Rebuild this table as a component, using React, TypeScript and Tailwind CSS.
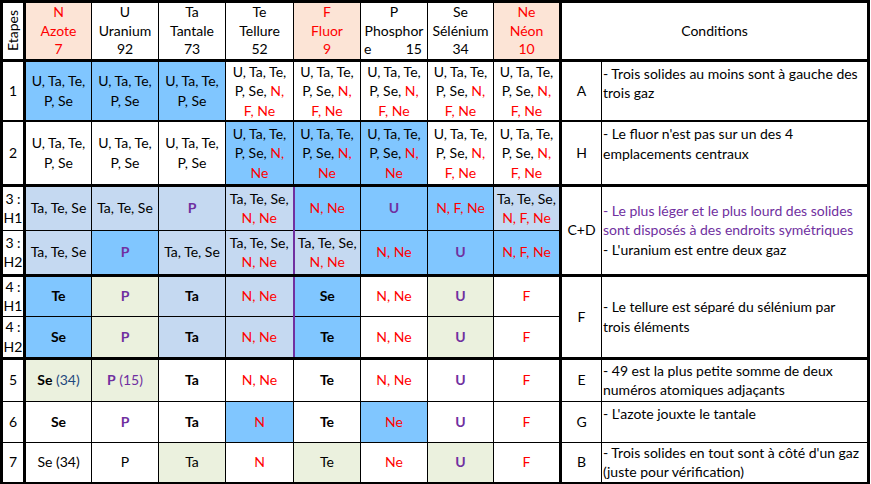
import React from 'react';

const BLUE = 'bg-[#80c6ff]';
const LIGHT = 'bg-[#c5d9f1]';
const GREEN = 'bg-[#ebf1de]';
const WHITE = 'bg-white';
const PEACH = 'bg-[#fce4d6]';

const R = ({ children }: { children: React.ReactNode }) => <span className="text-[#ff0000]">{children}</span>;
const PB = ({ children }: { children: React.ReactNode }) => <span className="font-bold text-[#7030a0]">{children}</span>;
const B = ({ children }: { children: React.ReactNode }) => <span className="font-bold">{children}</span>;

type Cell = [string, React.ReactNode[]];

interface Row {
  label: string[];
  h: string;
  bottom: string;
  purple?: boolean;
  cells: Cell[];
  cond?: { letter: string; lines: React.ReactNode[]; span?: number; top?: boolean };
}

const all5 = ['U, Ta, Te,', 'P, Se'];
const all8 = ['U, Ta, Te,', <>P, Se, <R>N,</R></>, <R>F, Ne</R>];
const noF = ['U, Ta, Te,', <>P, Se, <R>N,</R></>, <R>Ne</R>];
const tts = ['Ta, Te, Se'];
const ttsNNe = ['Ta, Te, Se,', <R>N, Ne</R>];
const ttsNFNe = ['Ta, Te, Se,', <R>N, F, Ne</R>];

const rows: Row[] = [
  {
    label: ['1'], h: 'h-[58px]', bottom: 'border-b-2',
    cells: [[BLUE, all5], [BLUE, all5], [BLUE, all5], [WHITE, all8], [WHITE, all8], [WHITE, all8], [WHITE, all8], [WHITE, all8]],
    cond: { letter: 'A', top: true, lines: ['- Trois solides au moins sont à gauche des', 'trois gaz'] },
  },
  {
    label: ['2'], h: 'h-[64px]', bottom: 'border-b-[3px]',
    cells: [[WHITE, all5], [WHITE, all5], [WHITE, all5], [BLUE, noF], [BLUE, noF], [BLUE, noF], [WHITE, all8], [WHITE, all8]],
    cond: { letter: 'H', top: true, lines: ["- Le fluor n'est pas sur un des 4", 'emplacements centraux'] },
  },
  {
    label: ['3 :', 'H1'], h: 'h-[45px]', bottom: 'border-b', purple: true,
    cells: [
      [LIGHT, tts], [LIGHT, tts], [LIGHT, [<PB>P</PB>]], [LIGHT, ttsNNe],
      [BLUE, [<R>N, Ne</R>]], [BLUE, [<PB>U</PB>]], [BLUE, [<R>N, F, Ne</R>]], [LIGHT, ttsNFNe],
    ],
    cond: {
      letter: 'C+D', span: 2,
      lines: [
        <span className="text-[#7030a0]">- Le plus léger et le plus lourd des solides</span>,
        <span className="text-[#7030a0]">sont disposés à des endroits symétriques</span>,
        "- L'uranium est entre deux gaz",
      ],
    },
  },
  {
    label: ['3 :', 'H2'], h: 'h-[45px]', bottom: 'border-b-[3px]', purple: true,
    cells: [
      [LIGHT, tts], [BLUE, [<PB>P</PB>]], [LIGHT, tts], [LIGHT, ttsNNe],
      [LIGHT, ttsNNe], [BLUE, [<R>N, Ne</R>]], [BLUE, [<PB>U</PB>]], [BLUE, [<R>N, F, Ne</R>]],
    ],
  },
  {
    label: ['4 :', 'H1'], h: 'h-[41px]', bottom: 'border-b', purple: true,
    cells: [
      [BLUE, [<B>Te</B>]], [GREEN, [<PB>P</PB>]], [LIGHT, [<B>Ta</B>]], [LIGHT, [<R>N, Ne</R>]],
      [BLUE, [<B>Se</B>]], [WHITE, [<R>N, Ne</R>]], [GREEN, [<PB>U</PB>]], [WHITE, [<R>F</R>]],
    ],
    cond: { letter: 'F', span: 2, lines: ['- Le tellure est séparé du sélénium par', 'trois éléments'] },
  },
  {
    label: ['4 :', 'H2'], h: 'h-[42px]', bottom: 'border-b-[3px]', purple: true,
    cells: [
      [BLUE, [<B>Se</B>]], [GREEN, [<PB>P</PB>]], [LIGHT, [<B>Ta</B>]], [LIGHT, [<R>N, Ne</R>]],
      [BLUE, [<B>Te</B>]], [WHITE, [<R>N, Ne</R>]], [GREEN, [<PB>U</PB>]], [WHITE, [<R>F</R>]],
    ],
  },
  {
    label: ['5'], h: 'h-[43px]', bottom: 'border-b',
    cells: [
      [GREEN, [<><B>Se</B> <span className="text-[#1f497d]">(34)</span></>]],
      [GREEN, [<><PB>P</PB> <span className="text-[#7030a0]">(15)</span></>]],
      [WHITE, [<B>Ta</B>]], [WHITE, [<R>N, Ne</R>]], [WHITE, [<B>Te</B>]],
      [WHITE, [<R>N, Ne</R>]], [WHITE, [<PB>U</PB>]], [WHITE, [<R>F</R>]],
    ],
    cond: { letter: 'E', lines: ['- 49 est la plus petite somme de deux', 'numéros atomiques adjaçants'] },
  },
  {
    label: ['6'], h: 'h-[41px]', bottom: 'border-b',
    cells: [
      [WHITE, [<B>Se</B>]], [WHITE, [<PB>P</PB>]], [WHITE, [<B>Ta</B>]], [BLUE, [<R>N</R>]],
      [WHITE, [<B>Te</B>]], [BLUE, [<R>Ne</R>]], [WHITE, [<PB>U</PB>]], [WHITE, [<R>F</R>]],
    ],
    cond: { letter: 'G', top: true, lines: ["- L'azote jouxte le tantale"] },
  },
  {
    label: ['7'], h: 'h-[41px]', bottom: 'border-b',
    cells: [
      [WHITE, ['Se (34)']], [WHITE, ['P']], [GREEN, ['Ta']], [WHITE, [<R>N</R>]],
      [GREEN, ['Te']], [WHITE, [<R>Ne</R>]], [GREEN, [<PB>U</PB>]], [WHITE, [<R>F</R>]],
    ],
    cond: { letter: 'B', lines: ["- Trois solides en tout sont à côté d'un gaz", '(juste pour vérification)'] },
  },
];

const headers: { bg: string; red: boolean; lines: React.ReactNode[] }[] = [
  { bg: PEACH, red: true, lines: ['N', 'Azote', '7'] },
  { bg: WHITE, red: false, lines: ['U', 'Uranium', '92'] },
  { bg: WHITE, red: false, lines: ['Ta', 'Tantale', '73'] },
  { bg: WHITE, red: false, lines: ['Te', 'Tellure', '52'] },
  { bg: PEACH, red: true, lines: ['F', 'Fluor', '9'] },
  {
    bg: WHITE, red: false,
    lines: ['P', 'Phosphor', <div className="flex justify-between pl-[3px] pr-[5px]"><span>e</span><span>15</span></div>],
  },
  { bg: WHITE, red: false, lines: ['Se', 'Sélénium', '34'] },
  { bg: PEACH, red: true, lines: ['Ne', 'Néon', '10'] },
];

const Lines = ({ lines }: { lines: React.ReactNode[] }) => (
  <>
    {lines.map((l, i) => (
      <div key={i} className="whitespace-nowrap">{l}</div>
    ))}
  </>
);

export default function App() {
  return (
    <div className="bg-white w-[871px] h-[484px] overflow-hidden font-['Lato',sans-serif] text-[14px] leading-[19.5px] text-black">
      <table className="table-fixed w-[870px] border-collapse border-[3px] border-black">
        <colgroup>
          <col className="w-[23px]" />
          <col className="w-[67px]" />
          <col className="w-[67px]" />
          <col className="w-[67px]" />
          <col className="w-[68px]" />
          <col className="w-[67px]" />
          <col className="w-[67px]" />
          <col className="w-[66px]" />
          <col className="w-[67px]" />
          <col className="w-[41px]" />
          <col />
        </colgroup>
        <tbody>
          <tr className="h-[54px] leading-[18.5px]">
            <td className="border border-black border-b-[3px] border-r-[3px] p-0 align-middle">
              <div className="flex justify-center">
                <span className="[writing-mode:vertical-rl] rotate-180">Etapes</span>
              </div>
            </td>
            {headers.map((h, i) => (
              <td
                key={i}
                className={`border border-black border-b-[3px] p-0 text-center align-middle ${h.bg} ${h.red ? 'text-[#ff0000]' : ''} ${i === 7 ? 'border-r-[3px]' : ''}`}
              >
                <Lines lines={h.lines} />
              </td>
            ))}
            <td colSpan={2} className="border border-black border-b-[3px] p-0 text-center align-middle">
              Conditions
            </td>
          </tr>
          {rows.map((row, ri) => (
            <tr key={ri} className={row.h}>
              <td className={`border border-black border-r-[3px] p-0 text-center align-middle ${row.bottom}`}>
                <Lines lines={row.label} />
              </td>
              {row.cells.map(([bg, lines], ci) => (
                <td
                  key={ci}
                  className={`border border-black p-0 text-center align-middle ${bg} ${row.bottom} ${ci === 7 ? 'border-r-[3px]' : ''} ${ci === 3 && row.purple ? 'border-r-2 border-r-[#7030a0]' : ''}`}
                >
                  <Lines lines={lines} />
                </td>
              ))}
              {row.cond && (
                <>
                  <td
                    rowSpan={row.cond.span ?? 1}
                    className={`border border-black p-0 text-center align-middle ${row.cond.span ? 'border-b-[3px]' : row.bottom}`}
                  >
                    {row.cond.letter}
                  </td>
                  <td
                    rowSpan={row.cond.span ?? 1}
                    className={`border border-black pl-[1px] pr-0 text-left ${row.cond.top ? 'align-top pt-[2px]' : 'align-middle'} ${row.cond.span ? 'border-b-[3px]' : row.bottom}`}
                  >
                    <Lines lines={row.cond.lines} />
                  </td>
                </>
              )}
            </tr>
          ))}
        </tbody>
      </table>
    </div>
  );
}
